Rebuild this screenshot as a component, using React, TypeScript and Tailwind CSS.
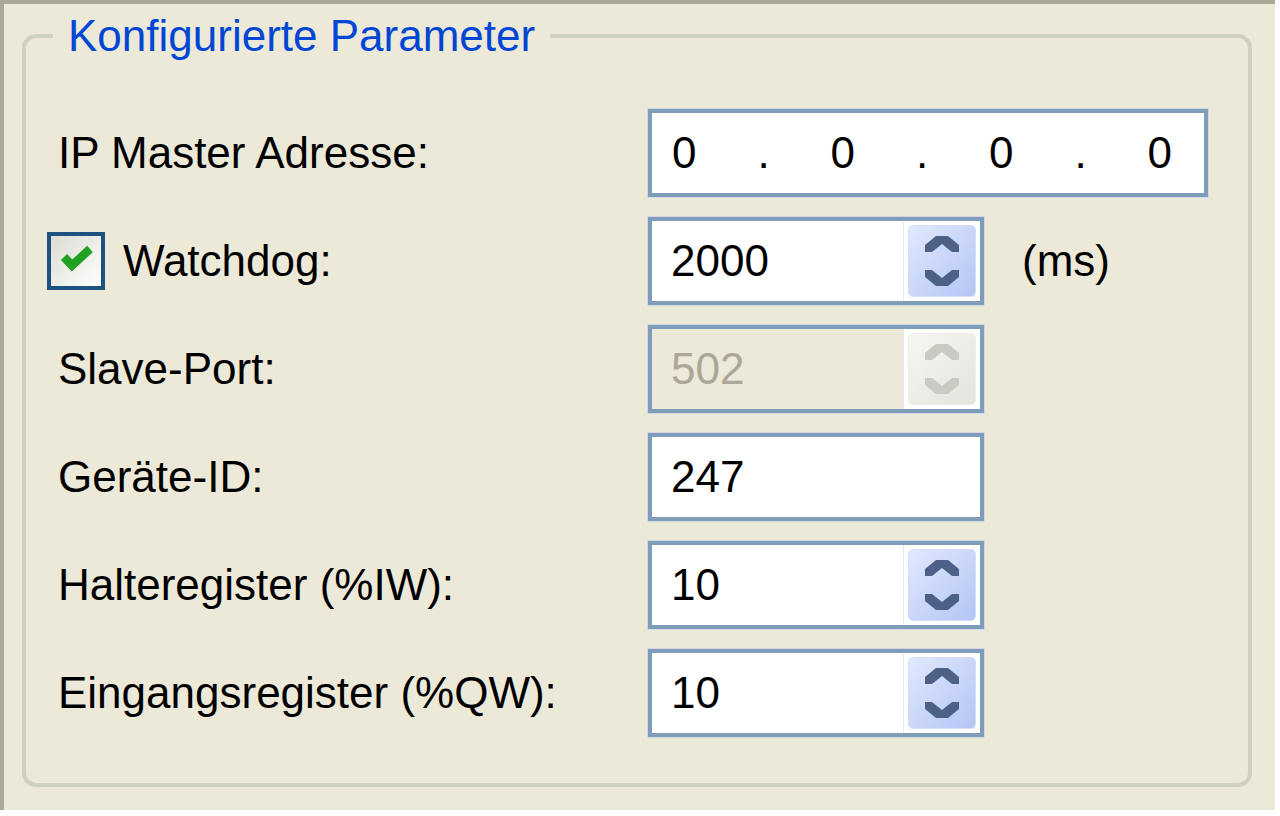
import React from 'react';

const font = { fontFamily: '"Liberation Sans", Arial, sans-serif' };

const SpinArrows: React.FC<{ disabled?: boolean }> = ({ disabled }) => (
    <div
        className={`w-[68px] h-[72px] rounded-[5px] border ${disabled
            ? 'border-[#eeede8] bg-gradient-to-br from-[#f7f6f3] to-[#e4e3dc]'
            : 'border-[#d2ddf8] bg-gradient-to-br from-[#e2e9fe] to-[#b3c5f5]'
            }`}
    >
        <svg width="68" height="72" viewBox="0 0 68 72" className="block -m-px">
            <g fill={disabled ? '#cbcac2' : '#4d6188'}>
                <polygon points="17,20 28,11 40,11 51,20 51,27 44,27 34,19 24,27 17,27" />
                <polygon points="17,45 24,45 34,53 44,45 51,45 51,52 40,61 28,61 17,52" />
            </g>
        </svg>
    </div>
);

const Field: React.FC<{ value: string; spin?: boolean; disabled?: boolean }> = ({ value, spin, disabled }) => (
    <div className="w-[336px] h-[88px] border-4 border-[#7f9db9] shadow-[0_0_0_1px_#cdd9e6] flex bg-white">
        <div
            className={`flex-1 flex items-center pl-[19px] text-[44px] ${disabled ? 'bg-[#ece9d8] text-[#aca899]' : 'text-black'}`}
        >
            {value}
        </div>
        {spin && (
            <div className="flex items-center border-l border-[#e3e9f0] px-[4px] bg-white">
                <SpinArrows disabled={disabled} />
            </div>
        )}
    </div>
);

const Label: React.FC<{ children: React.ReactNode }> = ({ children }) => (
    <div className="pl-[32px] flex items-center text-[44px] text-black">{children}</div>
);

export default function App() {
    return (
        <div className="w-[1280px] h-[816px] bg-white" style={font}>
            <div className="w-[1275px] h-[810px] bg-[#ece9d8] border-t-4 border-l-4 border-[#aca899]">
                <fieldset className="ml-[18px] mt-[7px] w-[1230px] h-[776px] border-4 border-[#d0d0bf] rounded-[14px]">
                    <legend className="ml-[27px] px-[15px] text-[44px] leading-[50px] text-[#0046d5]">
                        Konfigurierte Parameter
                    </legend>

                    <div className="pt-[48px] grid grid-cols-[622px_336px_auto] auto-rows-[88px] gap-y-[20px]">
                        <Label>IP Master Adresse:</Label>
                        <div className="col-span-2 w-[560px] h-[88px] border-4 border-[#7f9db9] shadow-[0_0_0_1px_#cdd9e6] bg-white flex items-center justify-between pl-[20px] pr-[32px] text-[44px] text-black">
                            <span>0</span>
                            <span>.</span>
                            <span>0</span>
                            <span>.</span>
                            <span>0</span>
                            <span>.</span>
                            <span>0</span>
                        </div>

                        <div className="pl-[21px] flex items-center gap-[18px] text-[44px] text-black">
                            <div className="w-[58px] h-[58px] border-4 border-[#1c5180] bg-gradient-to-br from-[#dcdcd3] to-white">
                                <svg width="50" height="50" viewBox="0 0 50 50" className="block">
                                    <polyline
                                        points="13,21 21,29.5 39,13"
                                        fill="none"
                                        stroke="#21a121"
                                        strokeWidth="8.5"
                                        strokeLinejoin="miter"
                                    />
                                </svg>
                            </div>
                            <span>Watchdog:</span>
                        </div>
                        <Field value="2000" spin />
                        <div className="pl-[38px] flex items-center text-[44px] text-black">(ms)</div>

                        <Label>Slave-Port:</Label>
                        <Field value="502" spin disabled />
                        <div />

                        <Label>Geräte-ID:</Label>
                        <Field value="247" />
                        <div />

                        <Label>Halteregister (%IW):</Label>
                        <Field value="10" spin />
                        <div />

                        <Label>Eingangsregister (%QW):</Label>
                        <Field value="10" spin />
                        <div />
                    </div>
                </fieldset>
            </div>
        </div>
    );
}
